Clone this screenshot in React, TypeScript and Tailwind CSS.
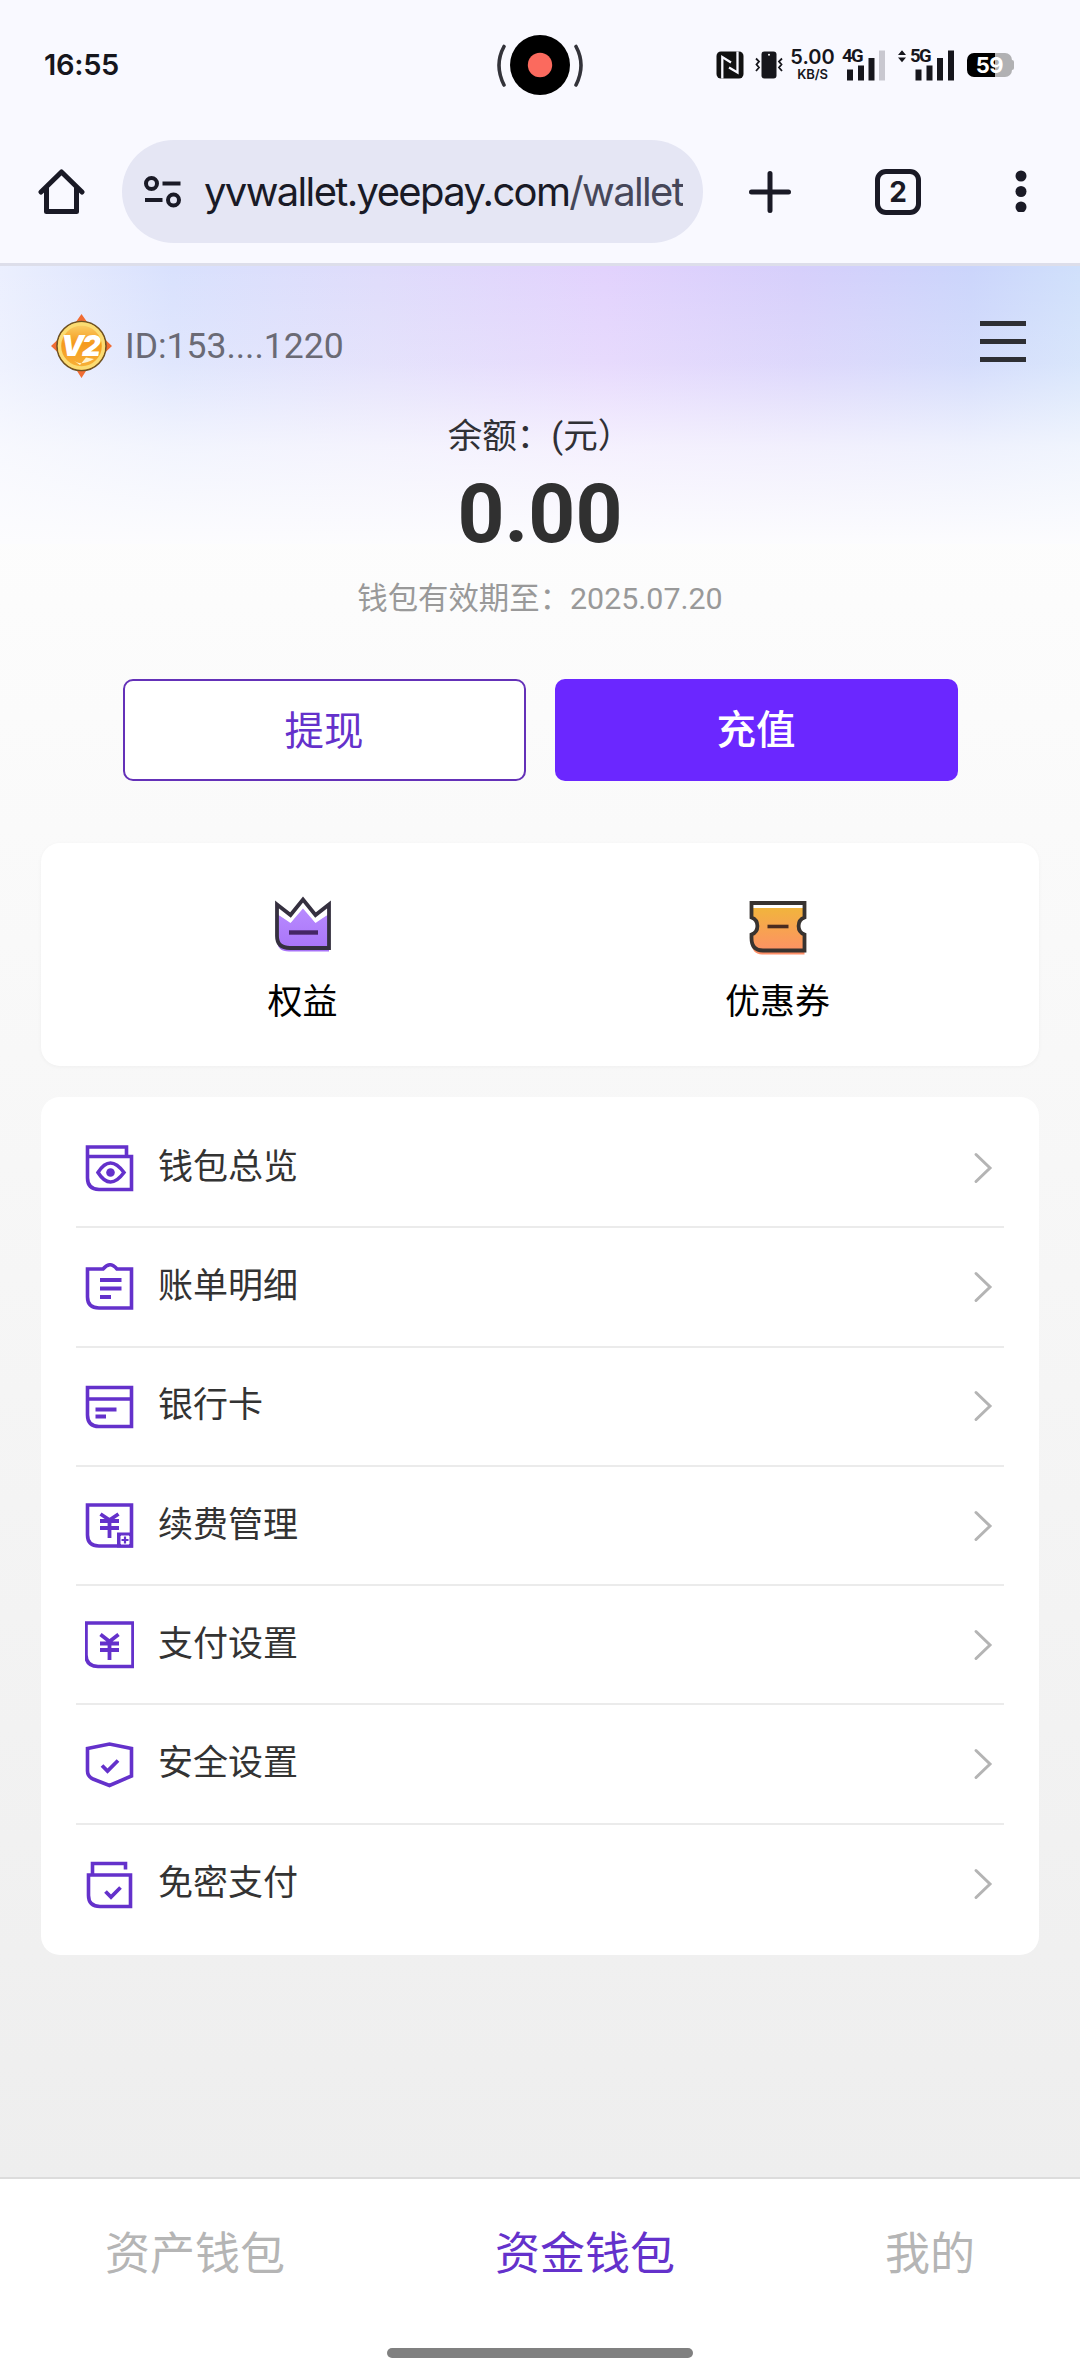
import React from "react";

const P = "#6431cb";

function Svg({ w, h, children, className = "", vb }: { w: number; h: number; children: React.ReactNode; className?: string; vb?: string }) {
  return (
    <svg width={w} height={h} viewBox={vb ?? `0 0 ${w} ${h}`} fill="none" className={`block shrink-0 ${className}`}>
      {children}
    </svg>
  );
}

function StatusBar() {
  return (
    <div className="relative flex h-[129px] items-center pl-[44px] pr-[66px] text-[#16161c]">
      <span className="font-['Inter'] text-[29px] font-semibold leading-none tracking-[-0.300px]">16:55</span>
      <div className="absolute left-[496px] top-[35px]">
        <Svg w={88} h={60}>
          <circle cx="44" cy="30" r="30" fill="#000" />
          <circle cx="44" cy="30" r="12.2" fill="#fb6a5e" />
          <path d="M8 11.500 Q-2 30 8 50 M80 11.500 Q90 30 80 50" stroke="#33333a" strokeWidth="3.600" strokeLinecap="round" />
        </Svg>
      </div>
      <div className="ml-auto flex items-center">
        <Svg w={28} h={28}>
          <rect x="0.500" y="0.500" width="27" height="27" rx="4.500" fill="#111" />
          <path d="M6.300 27.500 V6 L15 11.500 M21.500 0.500 V21.500 L13 16.500" stroke="#f9f9ff" strokeWidth="2.300" />
        </Svg>
        <Svg w={28} h={28} className="ml-[11px]">
          <rect x="6.500" y="0.500" width="15" height="27" rx="3" fill="#16161c" />
          <circle cx="14" cy="3.700" r="1" fill="#fff" />
          <path d="M1 7.500 l3 3 -2.500 3 2.500 3 -3 3.500 M27 7.500 l-3 3 2.500 3 -2.500 3 3 3.500" stroke="#16161c" strokeWidth="1.800" />
        </Svg>
        <div className="ml-[8px] flex w-[43px] flex-col items-center font-['Inter'] leading-none">
          <span className="text-[20px] font-semibold leading-[15px]">5.00</span>
          <span className="mt-[4px] text-[13px] font-semibold leading-[10px] tracking-[-0.200px]">KB/S</span>
        </div>
        <div className="relative ml-[8px] h-[32px] w-[44px]">
          <span className="absolute left-0 top-0 font-['Roboto'] text-[18.500px] font-bold leading-[14px] tracking-[-1.500px]">4G</span>
          <Svg w={44} h={32}>
            <path d="M5 20.500 h6 v11 h-6z M16 16.500 h6 v15 h-6z M26.500 9 h6 v22.500 h-6z" fill="#16161c" />
            <path d="M37 1.500 h6 v30 h-6z" fill="#c9c8d0" />
          </Svg>
        </div>
        <div className="relative ml-[11px] h-[32px] w-[58px]">
          <span className="absolute left-[13px] top-0 font-['Roboto'] text-[18.500px] font-bold leading-[14px] tracking-[-1.500px]">5G</span>
          <Svg w={58} h={32}>
            <path d="M1 6 l4 -4.800 4 4.800z M1 8.500 l4 4.800 4 -4.800z" fill="#16161c" />
            <path d="M18.500 20.500 h6 v11 h-6z M29.500 16.500 h6 v15 h-6z M40 9 h6 v22.500 h-6z M51 1.500 h6 v30 h-6z" fill="#16161c" />
          </Svg>
        </div>
        <div className="relative ml-[12px] flex items-center">
          <div className="flex h-[24px] w-[45px] items-center justify-center rounded-[7px] bg-[linear-gradient(90deg,#000_28px,#b1b1b3_28px)]">
            <span className="font-['Inter'] text-[22px] font-bold leading-none tracking-[-0.500px] text-white">59</span>
          </div>
          <div className="h-[10px] w-[2px] rounded-r-full bg-[#b1b1b3]" />
        </div>
      </div>
    </div>
  );
}

function BrowserBar() {
  return (
    <div className="flex h-[134px] items-start pl-[38px] pt-[11px]">
      <Svg w={47} h={47} className="mt-[28px]">
        <path d="M3 24 L23.500 4 L44 24 M8.500 20 V43.500 H38.500 V20" stroke="#1a1a26" strokeWidth="5" strokeLinecap="round" strokeLinejoin="round" />
      </Svg>
      <div className="ml-[37px] flex h-[103px] w-[581px] items-center rounded-full bg-[#e5e6f4] pl-[21px]">
        <Svg w={40} h={34}>
          <circle cx="8.500" cy="8.500" r="5.500" stroke="#1a1a26" strokeWidth="4" />
          <circle cx="30.500" cy="25" r="5.500" stroke="#1a1a26" strokeWidth="4" />
          <path d="M19.500 8.500 H37.500 M2 25 H19.500" stroke="#1a1a26" strokeWidth="4" />
        </Svg>
        <div className="ml-[21px] w-[479px] overflow-hidden whitespace-nowrap font-['Inter'] text-[40px] leading-[56px] tracking-[-1.650px] text-[#191a26]">
          yvwallet.yeepay.com<span className="text-[#464759]">/wallet</span>
        </div>
      </div>
      <Svg w={42} h={42} className="ml-[46px] mt-[31px]">
        <path d="M21 2.500 V39.500 M2.500 21 H39.500" stroke="#1a1a26" strokeWidth="5" strokeLinecap="round" />
      </Svg>
      <div className="ml-[84px] mt-[29px] flex h-[46px] w-[46px] items-center justify-center rounded-[11px] border-[5px] border-[#1a1a26] font-['Inter'] text-[28px] font-bold leading-none text-[#1a1a26]">
        2
      </div>
      <Svg w={12} h={42} className="ml-[94px] mt-[30px]">
        <circle cx="6" cy="6" r="5.500" fill="#1a1a26" />
        <circle cx="6" cy="21.500" r="5.500" fill="#1a1a26" />
        <circle cx="6" cy="37" r="5.500" fill="#1a1a26" />
      </Svg>
    </div>
  );
}

function Badge() {
  return (
    <div className="relative h-[64px] w-[61px]">
      <Svg w={61} h={64}>
        <defs>
          <linearGradient id="gold" x1="0" y1="0" x2="0" y2="1">
            <stop offset="0" stopColor="#fbd672" />
            <stop offset="0.450" stopColor="#f59a1c" />
            <stop offset="1" stopColor="#f7b43c" />
          </linearGradient>
        </defs>
        <path d="M30.500 0 L37.500 10 H23.500z M30.500 64 L37.500 53 H23.500z M0 32 L8 24.500 V39.500z M61 32 L53 24.500 V39.500z" fill="#f06c33" />
        <circle cx="30.500" cy="32" r="24.500" fill="url(#gold)" stroke="#6f5222" strokeWidth="1.600" />
        <circle cx="30.500" cy="32" r="22" stroke="#fbdc72" strokeWidth="3.400" />
        <path d="M21 45.500 Q30 53 43 45 L35 43.500 L29 51z" fill="#fff3cf" />
      </Svg>
      <span className="absolute left-[10px] top-[17px] font-['Inter'] text-[29px] font-black italic leading-[30px] tracking-[-2px] text-white">V2</span>
    </div>
  );
}

function CrownIcon() {
  return (
    <Svg w={60} h={60}>
      <defs>
        <linearGradient id="crown" x1="0" y1="0" x2="0" y2="1">
          <stop offset="0" stopColor="#b98cff" />
          <stop offset="1" stopColor="#a873f8" />
        </linearGradient>
      </defs>
      <path d="M4 20 L18 28 L30 12 L42 28 L56 20 V57.500 H16 Q4 57.500 4 46z" fill="url(#crown)" />
      <path d="M5.800 12 L17.500 22 L30 7 L42.500 22 L54.200 12 V21 L42.500 29 L30 14.500 L17.500 29 L5.800 21z" fill="#fff" />
      <path d="M4 10.500 L17.500 21 L30 5.500 L42.500 21 L56 10.500 V54 H17 Q4 54 4 42z" stroke="#35303f" strokeWidth="3.800" />
      <path d="M16 38.500 H45" stroke="#452665" strokeWidth="4.400" />
    </Svg>
  );
}

function TicketIcon() {
  return (
    <Svg w={60} h={60}>
      <defs>
        <linearGradient id="ticket" x1="0" y1="0" x2="0" y2="1">
          <stop offset="0" stopColor="#f1b53c" />
          <stop offset="1" stopColor="#fe8e68" />
        </linearGradient>
      </defs>
      <path d="M3.500 11 H56.500 V22 A8.500 9 0 0 0 56.500 39 V58.500 H14 Q3.500 58 3.500 46 V39 A8.500 9 0 0 0 3.500 22z" fill="url(#ticket)" />
      <path d="M4 8.500 H56 V12 H4z" fill="#fff" />
      <path d="M3.500 7 H56.500 V21.500 A8.800 9 0 0 0 56.500 38.500 V54.500 H15 Q3.500 54.500 3.500 42 V38.500 A8.800 9 0 0 0 3.500 21.500z" stroke="#383330" strokeWidth="3.800" />
      <path d="M19.500 30.500 H40.500" stroke="#4a2c20" strokeWidth="3.600" />
    </Svg>
  );
}

const yen = "M14.500 14 L23.500 21 M32.500 14 L23.500 21 M14 23 H33 M14 29.500 H33 M23.500 20 V39.500";

const icons: Record<string, React.ReactNode> = {
  wallet: (
    <>
      <path d="M1.500 13.500 V2 H40.500 V11.500 H45.500 V44.500 H13 Q1.500 44 1.500 33z M1.500 11.500 H45.500" />
      <path d="M12 27.500 Q24 8.500 38 27.500 Q24 46.500 12 27.500z" />
      <circle cx="24.500" cy="27.500" r="4.300" fill={P} stroke="none" />
    </>
  ),
  bill: (
    <>
      <path d="M1.500 5 H17 Q24 -3.500 31 5 H45.500 V44 H13 Q1.500 44 1.500 33z" />
      <path d="M14 16 H35.500 M14 24.500 H35.500 M14 33 H25" strokeWidth="3.800" />
    </>
  ),
  card: (
    <>
      <path d="M1.500 3.500 H45.500 V42.500 H13 Q1.500 42.500 1.500 31z M1.500 15 H45.500" />
      <path d="M9.500 25.500 H30.500 M9.500 32.500 H20" strokeWidth="3.800" />
    </>
  ),
  renew: (
    <>
      <path d="M1.500 2 H45.500 V43 H13 Q1.500 43 1.500 32z" />
      <path d="M14.500 11 L23.500 17 M32.500 11 L23.500 17 M14 18 H33 M14 25 H33 M23.500 17 V35" strokeWidth="3.800" />
      <rect x="31" y="29.500" width="16" height="15" fill={P} stroke="none" />
      <path d="M35 33 H43 V41 H35z" stroke="#fff" strokeWidth="1" fill="#fff" />
      <path d="M39 33.500 V40.500 M35.500 37 H42.500" strokeWidth="2.200" />
    </>
  ),
  pay: (
    <>
      <path d="M0 1 H47 V44.500 H12 Q0 44 0 33z" />
      <path d={yen} strokeWidth="3.800" transform="translate(0 -1.500)" />
    </>
  ),
  shield: (
    <>
      <path d="M1.500 6.500 L23.500 2 L45.500 6.500 V34 L23.500 43.500 L7 37 Q1.500 34.500 1.500 29z" />
      <path d="M16 23.500 L21.500 29 L32 18.500" strokeWidth="3.800" />
    </>
  ),
  lock: (
    <>
      <path d="M2.500 13 H44.500 V44.500 H14 Q2.500 44.500 2.500 33.500z" />
      <path d="M6.500 13 V1.500 H39.500 V7.500" />
      <path d="M19.500 29.500 L25 35 L34.500 25.500" strokeWidth="3.800" />
    </>
  ),
};

const rows = [
  ["wallet", "钱包总览"],
  ["bill", "账单明细"],
  ["card", "银行卡"],
  ["renew", "续费管理"],
  ["pay", "支付设置"],
  ["shield", "安全设置"],
  ["lock", "免密支付"],
];

export default function App() {
  return (
    <div className="flex h-[2376px] w-[1080px] flex-col overflow-hidden bg-white font-['Roboto','Noto_Sans_CJK_SC',sans-serif]">
      <header className="h-[266px] shrink-0 border-b-[3px] border-[#dddeea] bg-[#f9f9ff]">
        <StatusBar />
        <BrowserBar />
      </header>

      <main className="relative flex h-[1911px] shrink-0 flex-col bg-[linear-gradient(180deg,#ffffff,#eeeeee)]">
        <div className="absolute inset-x-0 top-0 h-[278px] bg-[linear-gradient(180deg,rgba(252,252,254,0)_0%,rgba(252,252,254,0.200)_35%,rgba(252,252,254,0.720)_65%,#fcfcfe_100%),linear-gradient(90deg,#ebeffe_0%,#d9e1fd_16%,#dfdcfb_35%,#e2d2fd_56%,#d6cffb_74%,#cbd5fb_90%,#d0e0fb_100%)]" />
        <div className="relative flex items-center pl-[51px] pr-[54px] pt-[48px]">
          <Badge />
          <span className="ml-[13px] text-[35.500px] leading-[64px] text-[#6a6a75]">ID:153....1220</span>
          <div className="mb-[10px] ml-auto flex w-[46px] flex-col gap-[13px]">
            <div className="h-[5px] bg-[#2e2f34]" />
            <div className="h-[5px] bg-[#2e2f34]" />
            <div className="h-[5px] bg-[#2e2f34]" />
          </div>
        </div>
        <div className="relative mt-[32px] text-center text-[34.560px] leading-[52px] text-[#303035]">余额：(元）</div>
        <div className="relative mt-[12px] text-center text-[82px] font-bold leading-[80px] text-[#303030]">0.00</div>
        <div className="relative mt-[23px] text-center text-[30.400px] leading-[44px] text-[#999]">钱包有效期至：2025.07.20</div>

        <div className="relative mt-[58px] flex justify-center gap-[29px] text-[39.500px]">
          <div className="flex h-[102px] w-[403px] items-center justify-center rounded-[10px] border-2 border-[#6431b8] bg-white pt-[4px] text-[#6431cb]">提现</div>
          <div className="flex h-[102px] w-[403px] items-center justify-center rounded-[10px] bg-[#6b27ff] pt-[2px] font-medium text-white">充值</div>
        </div>

        <div className="mx-[41px] mt-[62px] grid h-[223px] grid-cols-2 rounded-[19px] bg-white shadow-[0_1px_4px_rgba(0,0,0,0.040)]">
          <div className="flex flex-col items-center pl-[24px] pt-[51px]">
            <CrownIcon />
            <span className="mt-[23px] text-[35px] leading-[52px] text-black">权益</span>
          </div>
          <div className="flex flex-col items-center pr-[24px] pt-[53px]">
            <TicketIcon />
            <span className="mt-[21px] text-[35px] leading-[52px] text-black">优惠券</span>
          </div>
        </div>

        <div className="mx-[41px] mt-[31px] h-[858px] rounded-[19px] bg-white px-[35px] pt-[12px]">
          {rows.map(([icon, label], i) => (
            <div key={icon} className={`flex h-[119.300px] items-center pl-[9px] pr-[11px] ${i < 6 ? "border-b-2 border-[#ebebeb]" : ""}`}>
              <svg width="49" height="49" viewBox="-1 -1 49 49" fill="none" stroke={P} strokeWidth="3.600" className="mt-[2px]">
                {icons[icon]}
              </svg>
              <span className="ml-[24px] text-[35px] leading-[52px] text-[#333]">{label}</span>
              <Svg w={20} h={32} className="ml-auto">
                <path d="M3 2.500 L17 16 L3 29.500" stroke="#b4b4b4" strokeWidth="3" strokeLinecap="round" />
              </Svg>
            </div>
          ))}
        </div>
      </main>

      <nav className="flex h-[199px] shrink-0 flex-col items-center border-t-2 border-[#dcdcdc] bg-white">
        <div className="flex h-[152px] w-full items-center justify-between px-[105px] text-[45px] text-[#b5b5b5]">
          <span>资产钱包</span>
          <span className="text-[#6431cb]">资金钱包</span>
          <span>我的</span>
        </div>
        <div className="mt-[17px] h-[10px] w-[306px] rounded-full bg-[#808080]" />
      </nav>
    </div>
  );
}
